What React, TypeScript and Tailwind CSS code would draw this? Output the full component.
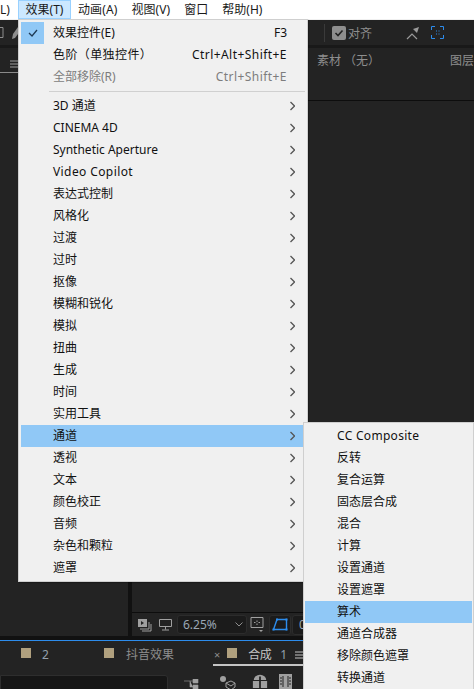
import React from "react";

const FONT = '"Noto Sans","Noto Sans CJK SC",sans-serif';

const Chevron = () => (
  <svg width="5" height="10" viewBox="0 0 5 10" className="shrink-0">
    <path d="M.5 1l4 4-4 4" fill="none" stroke="#555" strokeWidth="1.3" />
  </svg>
);

const items = ["3D 通道", "CINEMA 4D", "Synthetic Aperture", "Video Copilot", "表达式控制", "风格化", "过渡", "过时", "抠像", "模糊和锐化", "模拟", "扭曲", "生成", "时间", "实用工具", "通道", "透视", "文本", "颜色校正", "音频", "杂色和颗粒", "遮罩"];
const sub = ["CC Composite", "反转", "复合运算", "固态层合成", "混合", "计算", "设置通道", "设置遮罩", "算术", "通道合成器", "移除颜色遮罩", "转换通道"];
const Square = () => <div className="w-[10px] h-[10px] bg-[#b0a07e] shrink-0" />;

const Hamburger = ({ color = "#a0a0a0" }: { color?: string }) => (
  <svg width="9" height="8" viewBox="0 0 9 8"><path d="M0 1h9M0 4h9M0 7h9" stroke={color} strokeWidth="1" /></svg>
);

export default function App() {
  return (
    <div className="relative w-[474px] h-[689px] overflow-hidden flex flex-col bg-[#111111] text-[12px]" style={{ fontFamily: FONT }}>
      {/* menu bar */}
      <div className="h-[19px] bg-white flex items-center text-[12px] text-[#1a1a1a] shrink-0">
        <span className="w-[18px] overflow-hidden whitespace-nowrap">L)</span>
        <div className="w-[53px] h-[19px] bg-[#cce8ff] border border-[#99d1ff] flex items-center justify-center">效果(T)</div>
        <span className="ml-[7px] tracking-[0.1px]">动画(A)</span>
        <span className="ml-[14px] tracking-[0.1px]">视图(V)</span>
        <span className="ml-[14px]">窗口</span>
        <span className="ml-[14px]">帮助(H)</span>
      </div>
      <div className="h-px bg-[#f0f0f0] shrink-0" />
      {/* toolbar */}
      <div className="h-[25px] bg-[#232323] flex items-center shrink-0">
        <svg className="shrink-0" width="18" height="14" viewBox="0 0 18 14">
          <path d="M-1 1.5h4v10h-4" fill="none" stroke="#8e8e8e" />
          <path d="M12 13l1-5 5-7v7l-3 4z" fill="#8e8e8e" />
        </svg>
        <div className="ml-[306px] w-px h-[18px] bg-[#3a3a3a]" />
        <div className="ml-[7px] w-[14px] h-[14px] rounded-[2px] bg-[#8e8e8e] flex items-center justify-center">
          <svg width="10" height="10" viewBox="0 0 10 10"><path d="M1.5 5l2.5 2.5L8.5 2.5" fill="none" stroke="#222" strokeWidth="1.6" /></svg>
        </div>
        <span className="ml-[2px] text-[#8e8e8e] relative top-px">对齐</span>
        <svg className="ml-[34px]" width="14" height="14" viewBox="0 0 14 14">
          <path d="M1 13l5-5 5 5" fill="none" stroke="#9a9a9a" strokeWidth="1.2" />
          <path d="M13 1l-6 2 4 4z" fill="#9a9a9a" />
        </svg>
        <svg className="ml-[11px]" width="13" height="13" viewBox="0 0 13 13">
          <path d="M.5 4V.5H4M9 .5h3.5V4M12.5 9v3.5H9M4 12.5H.5V9M5 5h1M7.5 5h1M5 8h1M7.5 8h1" fill="none" stroke="#2d8ceb" strokeWidth="1" />
        </svg>
      </div>
      <div className="h-[3px] bg-[#191919] shrink-0" />
      {/* panels */}
      <div className="h-[588px] flex gap-[4px] shrink-0">
        <div className="w-[128px] bg-[#232323] flex flex-col">
          <div className="h-[24px] flex items-end pl-[10px] pb-[4px]"><Hamburger /></div>
          <div className="h-px w-[18px] bg-[#8a8a8a]" />
        </div>
        <div className="flex-1 bg-[#232323] flex flex-col">
          <div className="h-[53px] border-b border-b-[#0d0d0d] pt-[4px] flex text-[#8e8e8e]">
            <span className="ml-[185px]">素材 （无）</span>
            <span className="ml-auto">图层</span>
          </div>
          <div className="h-[512px] border-b border-b-[#0d0d0d]" />
          <div className="flex-1 flex items-center pl-[5px]">
            <svg width="15" height="14" viewBox="0 0 15 14">
              <path d="M1 1h9v8H1z" fill="#a0a0a0" /><path d="M4 3l3 2-3 2z" fill="#232323" />
              <path d="M12 4v7H3M14 6v7H5" fill="none" stroke="#a0a0a0" />
            </svg>
            <svg className="ml-[7px]" width="13" height="13" viewBox="0 0 13 13">
              <path d="M.5 1.5h12v7H.5zM6.5 9v2.5M3 12h7" fill="none" stroke="#a0a0a0" />
            </svg>
            <div className="ml-[5px] w-[70px] h-[19px] bg-[#1b1b1b] border border-[#2c2c2c] rounded-[3px] flex items-center pl-[5px] text-[#9aa7b5]">
              6.25%
              <svg className="ml-auto mr-[3px]" width="8" height="5" viewBox="0 0 8 5"><path d="M.5.5L4 4 7.5.5" fill="none" stroke="#8e8e8e" /></svg>
            </div>
            <svg className="ml-[3px]" width="14" height="18" viewBox="0 0 14 18">
              <path d="M1 1.5h12v10H1z" fill="none" stroke="#a0a0a0" />
              <path d="M7 4.5v1.5M7 7.5v1.5M4 6.5h1.5M8.5 6.5H10" fill="none" stroke="#a0a0a0" />
              <path d="M9 14l2 2 2-2z" fill="#a0a0a0" />
            </svg>
            <div className="ml-[5px] w-[22px] h-[20px] bg-[#1b1b1b] border border-[#2c2c2c] rounded-[3px] flex items-center justify-center">
              <svg width="16" height="13" viewBox="0 0 16 13">
                <path d="M5 1.5h9.5v10H1.5z" fill="none" stroke="#2d8ceb" strokeWidth="1.4" />
                <path d="M4 .5h2v2H4zM13.5.5h2v2h-2zM13.5 10.5h2v2h-2zM.5 10.5h2v2h-2z" fill="#2d8ceb" />
              </svg>
            </div>
            <div className="ml-px flex-1 h-[20px] bg-[#1b1b1b] border border-[#2c2c2c] rounded-[3px] pl-[6px] leading-[17px] text-[#9aa7b5] overflow-hidden">0</div>
          </div>
        </div>
      </div>
      <div className="h-[4px] bg-[#111111] shrink-0" />
      <div className="h-px bg-[#2d8ceb] shrink-0" />
      {/* bottom panel */}
      <div className="flex-1 bg-[#232323] flex flex-col">
        <div className="h-[25px] flex text-[#8e8e8e] pt-[7px] pl-[21px]">
          <div><Square /></div>
          <span className="ml-[11px] text-[#93a0ad] leading-[14px]">2</span>
          <div className="ml-[55px]"><Square /></div>
          <span className="ml-[12px] leading-[14px]">抖音效果</span>
          <span className="ml-[40px] text-[11px] leading-[14px]">×</span>
          <div className="ml-[7px]"><Square /></div>
          <span className="ml-[11px] text-[#c4c4c4] leading-[14px] tracking-[-0.5px]">合成</span>
          <span className="ml-[9px] text-[#93a0ad] leading-[14px]">1</span>
        </div>
        <div className="flex-1 flex items-start relative">
          <div className="w-[168px] h-full mt-[9px] bg-[#161616] border border-[#2e2e2e] rounded-tr-[3px]" />
          <svg className="ml-[16px] mt-[13px]" width="15" height="10" viewBox="0 0 15 10">
            <path d="M0 2h9M9 0v4h5V0zM6 2v6h3M9 6v4h5V6z" fill="#a0a0a0" stroke="#a0a0a0" strokeWidth=".6" />
          </svg>
          <svg className="ml-[19px] mt-[8px]" width="18" height="16" viewBox="0 0 18 16">
            <circle cx="5" cy="5" r="3" fill="#a0a0a0" />
            <path d="M8 9l5-2 4 2-4 3zM8 9v4l5 3 4-3V9" fill="none" stroke="#a0a0a0" />
          </svg>
          <svg className="ml-[16px] mt-[7px]" width="16" height="16" viewBox="0 0 18 16">
            <path d="M2 7a7 6 0 0 1 14 0zM1 8h16v8H1z" fill="#a0a0a0" /><path d="M9 3v13" stroke="#232323" strokeWidth="2" />
          </svg>
          <svg className="ml-[11px] mt-[7px]" width="13" height="16" viewBox="0 0 13 16">
            <path d="M0 1h13v15H0z" fill="#a0a0a0" />
            <path d="M4 3v11M9 3v11M1 5h2M1 8h2M1 11h2M10 5h2M10 8h2M10 11h2" stroke="#232323" />
          </svg>
        </div>
      </div>

      {/* tab underline + hamburger overlay */}
      <div className="absolute left-[213px] top-[664px] w-[90px] h-[2px] bg-[#c4c4c4]" />
      <div className="absolute left-[295px] top-[651px]"><Hamburger color="#c4c4c4" /></div>

      {/* main menu */}
      <div className="absolute left-[18px] top-[19px] w-[290px] h-[563px] bg-[#f0f0f0] border border-[#cfcfcf] pt-[2px] px-[2px] text-[#111111] shadow-[1px_1px_1px_rgba(0,0,0,0.25)]">
        <div className="h-[22px] flex items-center relative">
          <div className="w-[23px] h-[22px] bg-[#90c8f6] flex items-center justify-center">
            <svg width="10" height="8" viewBox="0 0 10 8"><path d="M1 4l3 3 5-6" fill="none" stroke="#1f3a55" strokeWidth="1.3" /></svg>
          </div>
          <span className="ml-[9px]">效果控件(E)</span>
          <span className="ml-auto mr-[18px]">F3</span>
        </div>
        <div className="h-[22px] flex items-center pl-[32px]">
          <span className="tracking-[0.4px]">色阶（单独控件）</span>
          <span className="ml-auto mr-[18px] tracking-[0.45px]">Ctrl+Alt+Shift+E</span>
        </div>
        <div className="h-[22px] flex items-center pl-[32px] text-[#7d7d7d]">
          <span>全部移除(R)</span>
          <span className="ml-auto mr-[18px] tracking-[0.45px]">Ctrl+Shift+E</span>
        </div>
        <div className="h-[7px] pl-[28px] pt-[3px]"><div className="h-px bg-[#d0d0d0]" /></div>
        {items.map((t) => (
          <div key={t} className={`h-[22px] flex items-center pl-[32px] pr-[10px] ${t === "通道" ? "bg-[#90c8f6]" : ""} ${t === "Video Copilot" ? "tracking-[0.4px]" : ""}`}>
            <span>{t}</span>
            <span className="ml-auto"><Chevron /></span>
          </div>
        ))}
      </div>

      {/* sub menu */}
      <div className="absolute left-[303px] top-[422px] w-[171px] h-[280px] bg-[#f0f0f0] border border-[#cfcfcf] pt-[2px] px-[1px] text-[#111111]">
        {sub.map((t) => (
          <div key={t} className={`h-[22px] flex items-center pl-[32px] ${t === "算术" ? "bg-[#90c8f6]" : ""} ${t === "CC Composite" ? "tracking-[0.3px]" : ""}`}>{t}</div>
        ))}
      </div>
    </div>
  );
}
